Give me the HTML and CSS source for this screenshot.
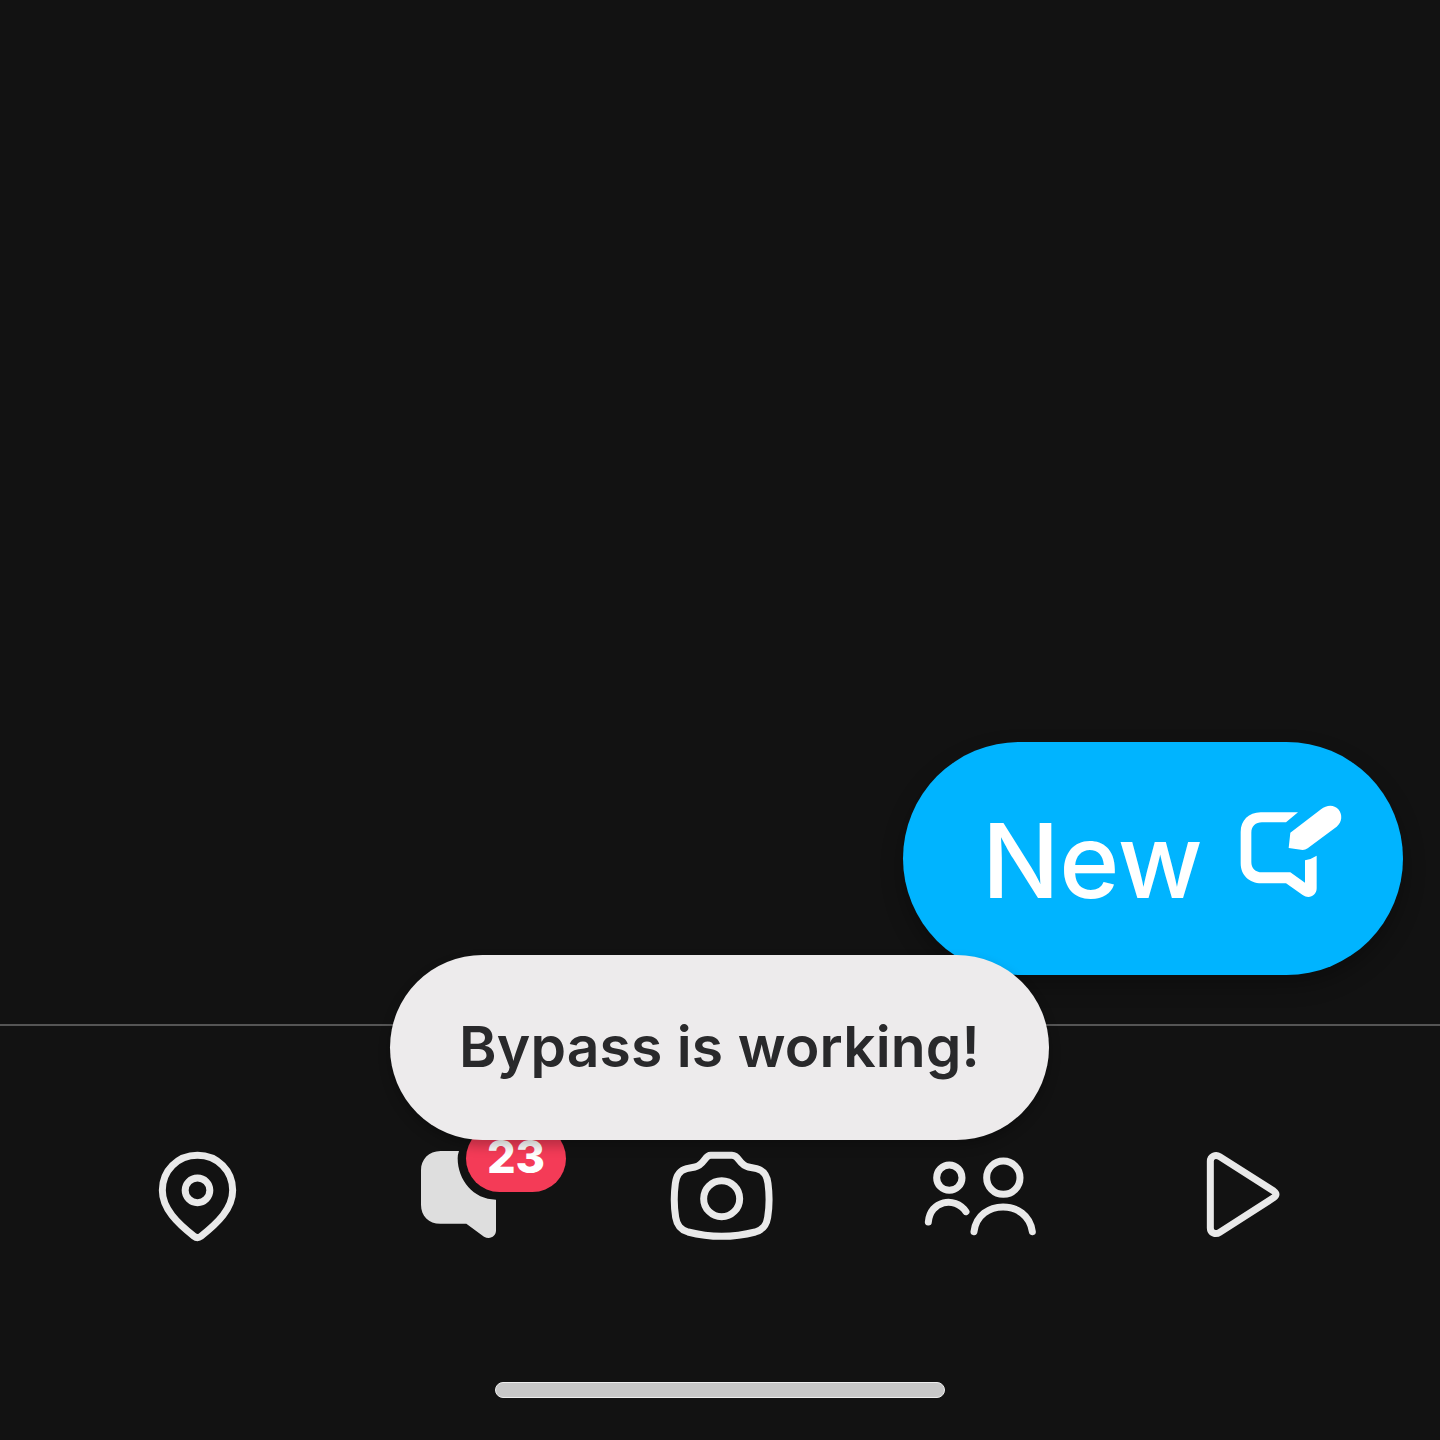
FILE: index.html
```html
<!DOCTYPE html>
<html lang="en">
<head>
<meta charset="utf-8">
<title>Chat</title>
<link rel="stylesheet" href="styles.css">
</head>
<body>
<main class="feed">
  <button class="new-chat">
    <span class="new-chat-label">New</span>
    <svg class="new-chat-icon" viewBox="0 0 420 420">
      <path d="M234 97H122C86 97 62 122 62 156V250C62 286 88 310 124 310H198L248 345C266 358 290 348 290 325V227Q275 237 255 241V308L211 277H126C106 277 94 265 94 246V158C94 139 107 127 126 127H198Z"/>
      <path d="M211 158L303 88C320 74 342 73 355 88C368 104 367 126 350 140L263 205Q256 210 248 210L206 204Z"/>
    </svg>
  </button>
</main>
<nav class="tabs">
  <a class="tab">
    <svg class="icon" viewBox="-12 18 360 360">
      <path d="M172.500 76C112 76 67 123 67 181C67 237 113 280 162 319Q172.500 327 183 319C232 280 278 237 278 181C278 123 233 76 172.500 76Z"/>
      <circle cx="172.500" cy="181" r="37"/>
    </svg>
  </a>
  <a class="tab">
    <svg class="icon icon-solid" viewBox="-6 48 360 360">
      <path d="M177 93H122C86 93 63 118 63 151V254C63 288 86 311 121 311H199L252 350C269 360 288 350 288 331V239C220 239 173 180 173 115Q173 104 177 93Z"/>
    </svg>
    <span class="badge">23</span>
  </a>
  <a class="tab">
    <svg class="icon" viewBox="30 18 360 360">
      <path d="M182 76H246C257 76 262 83 267 90C275 101 281 108 295 111L320 116C343 122 351 137 354 160Q361 213 353 262C349 286 340 299 316 306Q215 332 114 306C90 299 81 286 77 262Q69 213 76 160C79 137 87 122 110 116L135 111C149 108 155 101 163 90C168 83 172 76 182 76Z"/>
      <circle cx="215" cy="206" r="54"/>
    </svg>
  </a>
  <a class="tab">
    <svg class="icon" viewBox="36 18 360 360">
      <circle cx="118" cy="143" r="38"/>
      <circle cx="280" cy="143" r="50"/>
      <path d="M55 276C60 212 134 197 168 245M192 305C204 206 354 206 367 305"/>
    </svg>
  </a>
  <a class="tab">
    <svg class="icon" viewBox="12 18 360 360">
      <path d="M91 94V294C91 309 107 315 119 307L281 203Q295 193 281 183L119 80C107 72 91 79 91 94Z"/>
    </svg>
  </a>
</nav>
<footer class="system-bar"><div class="home-handle"></div></footer>
<div class="toast" role="status"><span class="toast-text">Bypass is working!</span></div>
</body>
</html>
```
FILE: styles.css
```css
* { box-sizing: border-box; }

body {
  position: relative;
  margin: 0;
  height: 1440px;
  display: flex;
  flex-direction: column;
  overflow: hidden;
  background: #121212;
  font-family: Inter, "Liberation Sans", sans-serif;
}

.feed {
  height: 1024px;
  padding: 0 37px 49px 0;
  display: flex;
  align-items: flex-end;
  justify-content: flex-end;
}

.new-chat {
  width: 500px;
  height: 233px;
  padding: 38px 43px 0 0;
  display: flex;
  align-items: flex-start;
  justify-content: flex-end;
  border: 0;
  border-radius: 117px;
  background: #00b4ff;
  box-shadow: 0 10px 22px rgba(0, 0, 0, 0.3);
  color: #fff;
  font-family: inherit;
}

.new-chat-label {
  width: 238px;
  margin-top: 21px;
  font-size: 102.500px;
  line-height: 120px;
  font-weight: 500;
  letter-spacing: -0.2px;
  text-align: left;
  white-space: nowrap;
}

.new-chat-icon {
  width: 140px;
  height: 140px;
  fill: #fff;
}

.tabs {
  height: 276px;
  padding: 110px 65px 0;
  display: grid;
  grid-template-columns: repeat(5, 262px);
  justify-items: center;
  align-items: start;
  border-top: 2px solid #555;
}

.tab {
  position: relative;
  width: 120px;
  height: 120px;
}

.icon {
  display: block;
  width: 120px;
  height: 120px;
  fill: none;
  stroke: #e9e9e9;
  stroke-width: 21;
  stroke-linecap: round;
  stroke-linejoin: round;
}

.icon-solid {
  fill: #dedede;
  stroke: none;
}

.badge {
  position: absolute;
  left: 68px;
  top: -11px;
  width: 100px;
  height: 67px;
  border-radius: 34px;
  background: #f43b57;
  color: #fff;
  font-size: 45px;
  line-height: 63px;
  font-weight: 800;
  text-align: center;
}

.system-bar {
  flex: 1;
  padding-top: 82px;
  display: flex;
  justify-content: center;
}

.home-handle {
  width: 450px;
  height: 16px;
  border: 1px solid #ededed;
  border-radius: 8px;
  background: #c7c7c7;
}

.toast {
  position: absolute;
  left: 390px;
  top: 955px;
  width: 659px;
  height: 185px;
  padding-bottom: 2px;
  display: flex;
  align-items: center;
  justify-content: center;
  border-radius: 93px;
  background: #edebec;
  box-shadow: 0 6px 12px rgba(0, 0, 0, 0.25);
  color: #29292b;
}

.toast-text {
  font-size: 57px;
  line-height: 70px;
  font-weight: 600;
  letter-spacing: 0.1px;
  white-space: nowrap;
}
```
